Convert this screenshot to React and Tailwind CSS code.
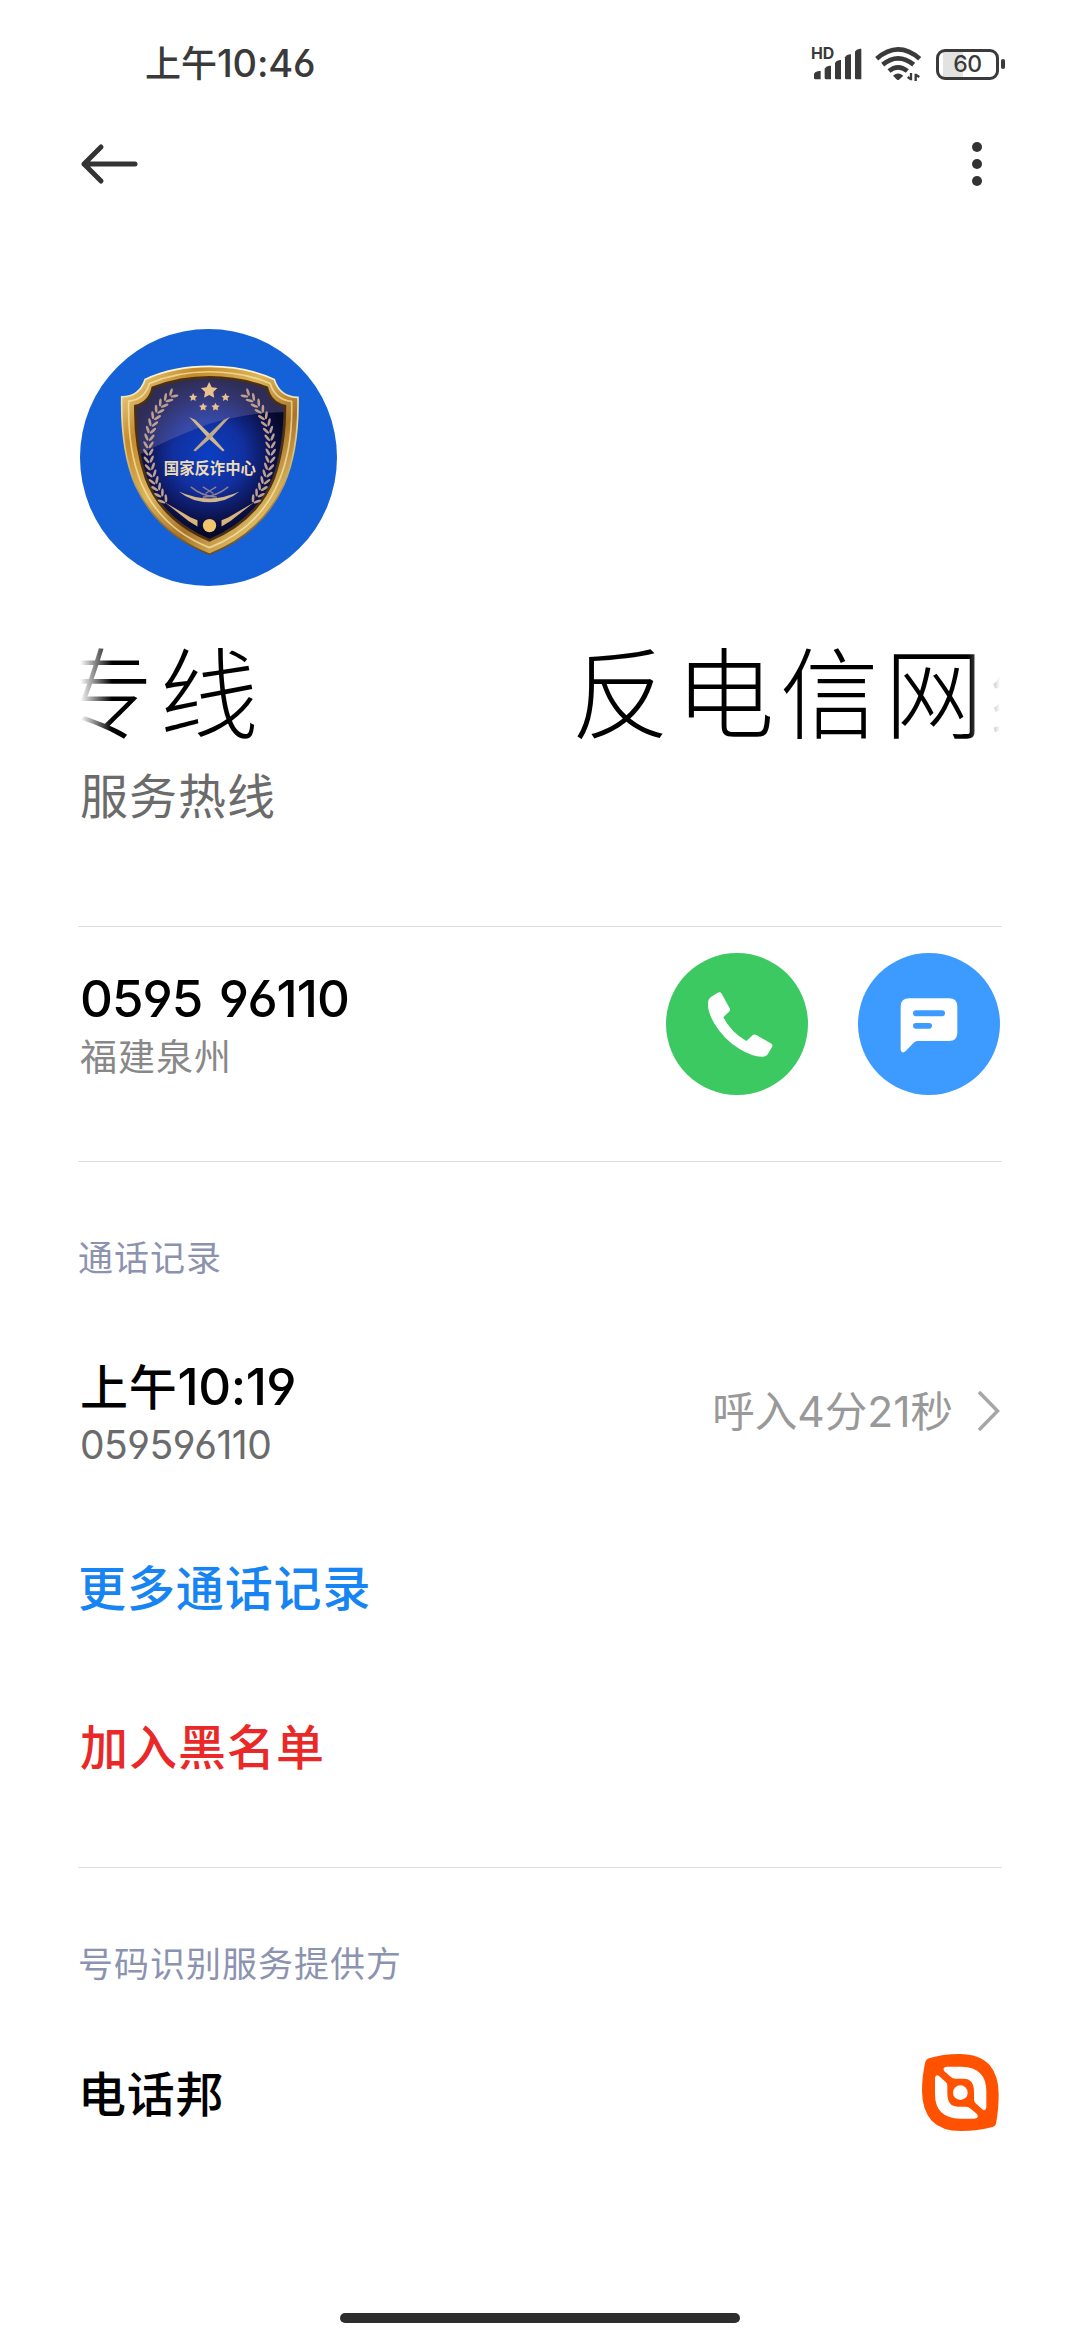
import React from 'react';

const CJK = "font-['Noto_Sans_CJK_SC',sans-serif]";
const NUM = "font-['Inter','Noto_Sans_CJK_SC',sans-serif] [font-feature-settings:'cv03','cv04']";

// Leaves of the left ear of wheat, from the tip down to the stem
const LEAVES = [
    [308, 222, 48], [292, 236, 42], [277, 252, 36], [265, 270, 30], [255, 289, 25],
    [247, 309, 20], [241, 330, 14], [237, 352, 8], [235, 374, 2], [235, 396, -3],
    [237, 418, -8], [241, 440, -12], [246, 461, -16], [253, 482, -20], [261, 502, -25],
    [270, 521, -30], [281, 539, -36],
];

function Star({ x, y, r }) {
    const points = Array.from({ length: 10 }, (_, i) => {
        const a = (Math.PI / 5) * i - Math.PI / 2;
        const d = i % 2 ? r * 0.5 : r;
        return `${x + d * Math.cos(a)},${y + d * Math.sin(a)}`;
    }).join(' ');
    return <polygon points={points} fill="#e9c28c" />;
}

function Wheat() {
    return (
        <g>
            {LEAVES.map(([x, y, rot]) => (
                <g key={y} transform={`translate(${x} ${y}) rotate(${rot})`} fill="#bda08f">
                    <ellipse cx="-8" cy="0" rx="4" ry="12" transform="rotate(-32 -8 0)" />
                    <ellipse cx="8" cy="0" rx="4" ry="12" transform="rotate(32 8 0)" />
                </g>
            ))}
            <path d="M284 546 L362 592 L382 600 V619 L355 602 Z" fill="#d9b37c" />
        </g>
    );
}

function Avatar() {
    return (
        <svg className="w-[257px] h-[257px] shrink-0" viewBox="30 27 770 770">
            <defs>
                <linearGradient id="gold" x1="0" y1="0" x2="1" y2="1">
                    <stop offset="0" stopColor="#f6e3a0" />
                    <stop offset="0.22" stopColor="#c48a2c" />
                    <stop offset="0.42" stopColor="#dcb45a" />
                    <stop offset="0.62" stopColor="#a97428" />
                    <stop offset="0.8" stopColor="#dcb862" />
                    <stop offset="1" stopColor="#7c5318" />
                </linearGradient>
                <linearGradient id="edge" x1="0" y1="0" x2="0" y2="1">
                    <stop offset="0" stopColor="#fff6cf" />
                    <stop offset="0.5" stopColor="#d9bb74" />
                    <stop offset="1" stopColor="#6e4a1c" />
                </linearGradient>
                <radialGradient id="field" gradientUnits="userSpaceOnUse" cx="415" cy="405" r="235">
                    <stop offset="0" stopColor="#0a3fc4" />
                    <stop offset="0.45" stopColor="#1230a0" />
                    <stop offset="0.8" stopColor="#0c1350" />
                    <stop offset="1" stopColor="#06082a" />
                </radialGradient>
                <clipPath id="inner">
                    <path d="M196 258 Q238 248 248 203 Q330 172 418 172 Q508 172 590 203 Q600 248 644 258 Q644 380 610 475 Q560 600 418 660 Q276 600 228 475 Q194 380 196 258 Z" />
                </clipPath>
            </defs>
            <circle cx="415" cy="412" r="385" fill="#1562d8" />
            <path d="M155 230 Q208 230 225 178 Q310 139 418 139 Q526 139 612 178 Q628 230 683 232 Q686 390 640 495 Q575 640 418 702 Q262 640 196 495 Q152 390 155 230 Z" fill="url(#gold)" stroke="url(#edge)" strokeWidth="5" />
            <path d="M176 243 Q224 238 238 190 Q320 155 418 155 Q516 155 600 190 Q614 238 664 244 Q668 385 625 485 Q566 624 418 682 Q270 624 212 485 Q172 385 176 243 Z" fill="none" stroke="#fbe9ae" strokeOpacity="0.7" strokeWidth="5" />
            <g clipPath="url(#inner)">
                <rect x="180" y="160" width="480" height="520" fill="url(#field)" />
                <path d="M180 150 H660 V275 Q500 278 380 325 Q290 360 205 405 L180 400 Z" fill="#8f86b8" fillOpacity="0.3" />
            </g>
            <path d="M196 258 Q238 248 248 203 Q330 172 418 172 Q508 172 590 203 Q600 248 644 258 Q644 380 610 475 Q560 600 418 660 Q276 600 228 475 Q194 380 196 258 Z" fill="none" stroke="#4a3014" strokeWidth="8" />
            <Wheat />
            <g transform="translate(836 0) scale(-1 1)">
                <Wheat />
            </g>
            <Star x={417} y={212} r={26} />
            <Star x={369} y={232} r={13} />
            <Star x={466} y={232} r={13} />
            <Star x={399} y={261} r={13} />
            <Star x={436} y={261} r={13} />
            {/* crossed swords */}
            <path d="M357 291 L376 300 L424 346 L463 390 L458 394 L412 352 Z" fill="#d0b98e" />
            <path d="M479 291 L460 300 L412 346 L370 390 L375 394 L424 352 Z" fill="#c2aa88" />
            <text x="419" y="462" textAnchor="middle" textLength="276" fontSize="46" fontWeight="700" fill="#eddcb4" className={CJK}>国家反诈中心</text>
            <path d="M326 514 Q418 555 508 514 Q470 546 418 546 Q365 546 326 514 Z" fill="#d3b78a" />
            <path d="M362 500 Q395 528 440 531 M474 500 Q440 528 398 531 M398 500 L430 520 M438 500 L406 520" fill="none" stroke="#8f8096" strokeWidth="4" />
            <circle cx="418" cy="616" r="20" fill="#f2c46c" />
        </svg>
    );
}

function StatusBar() {
    return (
        <header className="h-[128px] shrink-0 flex items-center justify-between pl-[145px] pr-[75px] text-[#3a3a3a]">
            <div className="flex items-baseline -mt-[4px] font-medium leading-[50px]">
                <span className={`${CJK} text-[36px]`}>上午</span>
                <span className={`${NUM} text-[38px] tracking-[-0.2px]`}>10:46</span>
            </div>
            <div className="flex items-center">
                <svg className="w-[51px] h-[36px] overflow-visible" viewBox="92 50 153 108" fill="currentColor">
                    <text x="92" y="89" fontSize="46" fontWeight="700" textLength="70" lengthAdjust="spacingAndGlyphs" className="font-['Inter',sans-serif]">HD</text>
                    <path d="M101 146 V134 Q103 127 116 125 H121 V150 H105 Q101 150 101 146 Z" />
                    <path d="M133 146 V118 Q136 111 147 109 H152 V150 H137 Q133 150 133 146 Z" />
                    <path d="M164 146 V101 Q167 94 178 92 H182 V150 H168 Q164 150 164 146 Z" />
                    <path d="M194 146 V84 Q197 77 208 75 H212 V150 H198 Q194 150 194 146 Z" />
                    <path d="M224 146 V67 Q227 60 239 58 H243 V150 H228 Q224 150 224 146 Z" />
                </svg>
                <svg className="w-[48px] h-[36px] ml-[12px]" viewBox="278 50 144 108" fill="none" stroke="currentColor" strokeWidth="14">
                    <path d="M286 88 Q350 32 415 88" />
                    <path d="M304 106 Q350 68 397 106" />
                    <path d="M323 125 Q350 103 378 125" />
                    <path d="M335 139 Q350 126 366 139 L353 151 Q350 153 347 151 Z" fill="currentColor" stroke="none" />
                    <path d="M389 131 V153 M389 150 L379 143" strokeWidth="7" />
                    <path d="M403 155 V133 M403 136 L414 143" strokeWidth="7" />
                </svg>
                <div className="flex items-center ml-[14px]">
                    <div className="w-[63px] h-[31px] rounded-[9px] border-[3px] border-[#3a3a3a] bg-[linear-gradient(to_right,white_4px,#e2e2e2_4px,#e2e2e2_24px,white_24px)] flex items-center justify-center">
                        <span className="font-['Inter',sans-serif] text-[23px] leading-none font-medium tracking-[-0.5px]">60</span>
                    </div>
                    <div className="w-[4px] h-[10px] ml-[2px] rounded-[2px] bg-[#3a3a3a]"></div>
                </div>
            </div>
        </header>
    );
}

function Divider() {
    return <div className="h-px -mx-[2px] shrink-0 bg-[#dedede]"></div>;
}

function App() {
    return (
        <div className={`w-[1080px] h-[2340px] bg-white flex flex-col overflow-hidden text-black ${CJK}`}>
            <StatusBar />

            {/* Toolbar */}
            <nav className="h-[72px] shrink-0 flex items-center justify-between pl-[79px] pr-[98px]">
                <button aria-label="返回">
                    <svg className="block w-[60px] h-[44px]" viewBox="0 0 60 44" fill="none" stroke="#333" strokeWidth="5" strokeLinecap="round" strokeLinejoin="round">
                        <path d="M5 22 H56 M22 5 L5 22 L22 39" />
                    </svg>
                </button>
                <button aria-label="更多" className="flex flex-col gap-[7px]">
                    <span className="w-[10px] h-[10px] rounded-full bg-[#333]"></span>
                    <span className="w-[10px] h-[10px] rounded-full bg-[#333]"></span>
                    <span className="w-[10px] h-[10px] rounded-full bg-[#333]"></span>
                </button>
            </nav>

            <main className="flex-1 flex flex-col px-[80px] pt-[129px]">
                <Avatar />

                <div className="mt-[44px] h-[116px] shrink-0 overflow-hidden [mask-image:linear-gradient(to_right,transparent,black_32px,black_888px,transparent)]">
                    <div className="flex -ml-[25px] text-[99px] leading-[116px] font-light tracking-[5.5px] whitespace-nowrap">
                        <span>专线</span>
                        <span className="ml-[307px]">反电信网络专线</span>
                    </div>
                </div>
                <p className="mt-[17px] text-[48px] leading-[60px] tracking-[1px] text-[#6b6b6b]">服务热线</p>

                <div className="mt-[103px]"></div>
                <Divider />
                <section className="h-[234px] shrink-0 flex items-start justify-between pt-[26px]">
                    <div className="pt-[15px]">
                        <div className={`${NUM} text-[51px] leading-[62px] font-medium tracking-[-1px] [word-spacing:4px]`}>0595 96110</div>
                        <div className="text-[37px] leading-[50px] tracking-[1px] text-[#888]">福建泉州</div>
                    </div>
                    <div className="flex gap-[50px]">
                        <button aria-label="拨打" className="w-[142px] h-[142px] rounded-full bg-[#3cc962]">
                            <svg className="w-full h-full" viewBox="78 68 426 426" fill="#fff">
                                <path d="M204 218 Q204 206 214 199 L233 187 Q241 183 245 190 L269 234 Q272 240 267 244 L250 261 Q273 306 319 332 L338 315 Q343 310 349 314 L392 339 Q400 343 396 350 L384 370 Q380 378 368 379 Q338 380 300 357 Q252 328 224 281 Q202 244 204 218 Z" />
                            </svg>
                        </button>
                        <button aria-label="短信" className="w-[142px] h-[142px] rounded-full bg-[#3d9bff]">
                            <svg className="w-full h-full" viewBox="654 68 426 426" fill="#fff">
                                <path d="M808 204 H927 Q952 204 952 229 V307 Q952 332 927 332 H832 Q826 332 821 337 L798 361 Q792 367 787 366 Q782 364 782 357 V229 Q782 204 808 204 Z" />
                                <rect x="819" y="240" width="96" height="18" rx="9" fill="#3d9bff" />
                                <rect x="819" y="278" width="57" height="17" rx="8.5" fill="#3d9bff" />
                            </svg>
                        </button>
                    </div>
                </section>
                <Divider />

                {/* Call history */}
                <h2 className="mt-[69px] -ml-[2px] text-[35px] leading-[50px] tracking-[1px] text-[#8c93b0]">通话记录</h2>
                <div className="mt-[66px] h-[130px] shrink-0 flex items-center justify-between">
                    <div>
                        <div className="flex items-baseline font-medium leading-[62px]">
                            <span className="text-[48px] tracking-[0.8px]">上午</span>
                            <span className={`${NUM} text-[51px] tracking-[-0.5px]`}>10:19</span>
                        </div>
                        <div className={`${NUM} text-[39px] leading-[54px] tracking-[-0.5px] text-[#6b6b6b]`}>059596110</div>
                    </div>
                    <div className="flex items-center -mt-[4px] text-[42.5px] leading-[60px] text-[#999]">
                        <span>呼入<span className={NUM}>4</span>分<span className={NUM}>21</span>秒</span>
                        <svg className="w-[24px] h-[44px] mt-[2px] ml-[23px]" viewBox="0 0 24 44" fill="none" stroke="#a6a6a6" strokeWidth="3.5">
                            <path d="M3 3 L21.500 22 L3 41" />
                        </svg>
                    </div>
                </div>

                <button className="mt-[78px] -ml-[2px] self-start text-[48px] leading-[60px] tracking-[0.9px] font-medium text-[#1684f2]">更多通话记录</button>
                <button className="mt-[99px] self-start text-[48px] leading-[60px] tracking-[1px] font-medium text-[#ea2828]">加入黑名单</button>

                <div className="mt-[93px]"></div>
                <Divider />
                <h2 className="mt-[69px] -ml-[2px] text-[35px] leading-[50px] tracking-[1px] text-[#8c93b0]">号码识别服务提供方</h2>
                <div className="mt-[63px] h-[84px] shrink-0 flex items-center justify-between">
                    <span className="-ml-[2px] -mt-[2px] text-[48px] leading-[60px] tracking-[0.8px] font-medium">电话邦</span>
                    <svg className="w-[79px] h-[79px]" viewBox="60 69 237 237" fill="#ff5200">
                        <path d="M84 85 Q125 72 175 72 Q235 72 266 105 Q293 138 293 192 Q293 240 285 281 Q283 289 275 291 Q230 303 180 303 Q122 303 92 272 Q63 238 63 182 Q63 140 73 95 Q76 87 84 85 Z" />
                        <g fill="#fff">
                            <path d="M130 124 Q122 110 140 110 H182 Q256 112 256 184 V232 Q254 246 243 237 L223 219 Q219 215 219 208 V186 Q219 146 188 146 H164 Q155 146 149 140 Z" />
                            <path transform="rotate(180 179 188)" d="M130 124 Q122 110 140 110 H182 Q256 112 256 184 V232 Q254 246 243 237 L223 219 Q219 215 219 208 V186 Q219 146 188 146 H164 Q155 146 149 140 Z" />
                            <circle cx="178" cy="188" r="22" />
                        </g>
                    </svg>
                </div>
            </main>

            {/* Home indicator */}
            <footer className="h-[27px] shrink-0 flex justify-center">
                <div className="w-[400px] h-[10px] rounded-full bg-[#2d2d2d]"></div>
            </footer>
        </div>
    );
}

export default App;
